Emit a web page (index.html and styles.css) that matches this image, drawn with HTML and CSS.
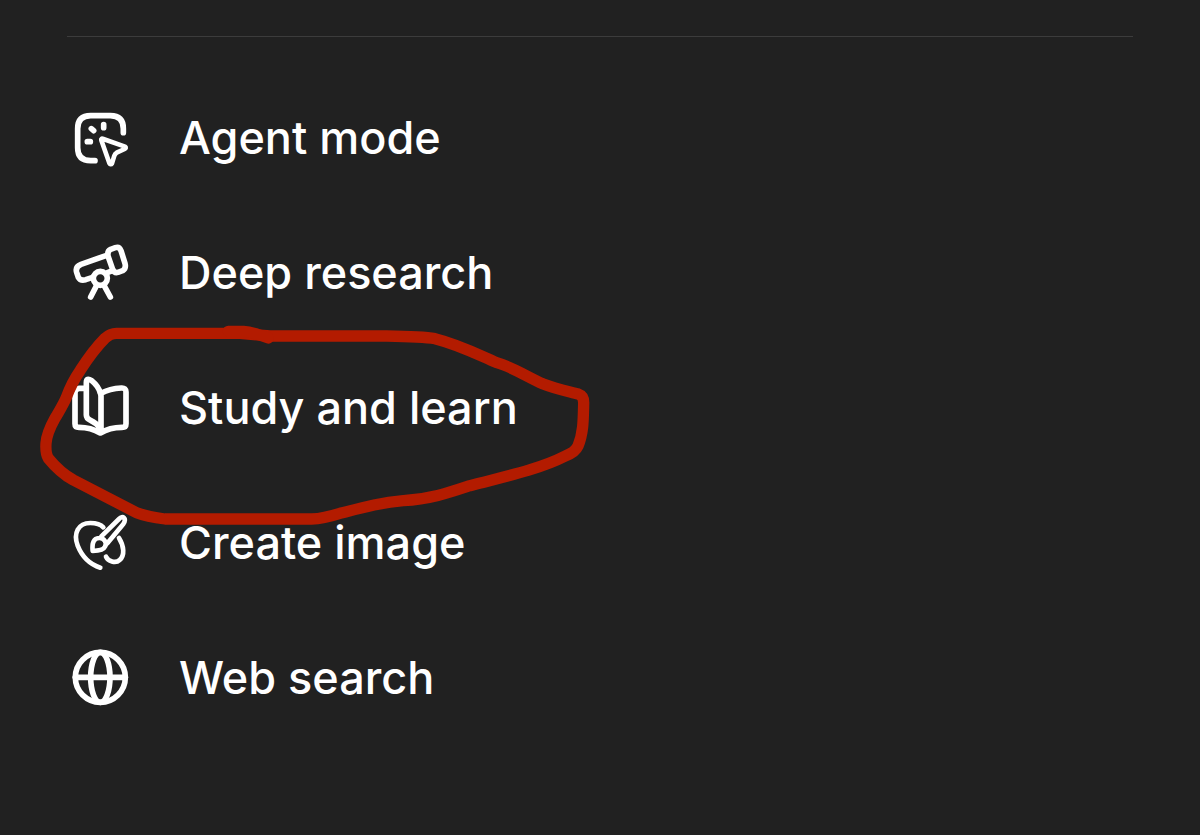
FILE: index.html
```html
<!DOCTYPE html>
<html lang="en">
<head>
  <meta charset="UTF-8" />
  <meta name="viewport" content="width=device-width, initial-scale=1" />
  <title>Tools menu</title>
  <link rel="stylesheet" href="styles.css">
</head>
<body>

<hr class="divider" />

<ul class="menu">
  <li>
    <button class="menu-item" type="button">
      <svg class="icon" viewBox="0 0 240 240" aria-hidden="true">
        <path d="M105 182H92Q53 182 53 143V86Q53 47 92 47H151Q190 47 190 86V98" />
        <path d="M131 74V83M94 86L101 92M82 125H91" />
        <path class="thin" d="M124 121Q122 114 130 117L195 140Q200 144 194 147L170 158Q165 161 163 167L156 190Q152 196 148 189Z" />
      </svg>
      <span class="label">Agent mode</span>
    </button>
  </li>
  <li>
    <button class="menu-item" type="button">
      <svg class="icon" viewBox="0 0 240 240" aria-hidden="true">
        <path d="M140 61L63 88Q45 95 50 112L55 127Q61 138 77 134L98 127" />
        <path d="M145 66Q140 49 152 43L166 38Q178 34 183 47L195 85Q199 101 188 107L174 112Q163 115 158 103Z" />
        <path d="M158 107L144 112" />
        <circle cx="121" cy="130" r="21" />
        <path d="M109 153L92 186M133 153L151 186" />
      </svg>
      <span class="label">Deep research</span>
    </button>
  </li>
  <li class="marked">
    <button class="menu-item" type="button">
      <svg class="icon" viewBox="0 6 240 240" aria-hidden="true">
        <path d="M70 61H58Q45 61 45 74V167Q45 178 57 178Q93 178 121 195Q149 178 186 178Q198 178 198 167V72Q198 59 184 60Q149 62 123 76V191" />
        <path d="M121 76Q116 55 95 38Q79 28 79 44V141Q79 151 91 157Q110 166 121 181" />
      </svg>
      <span class="label">Study and learn</span>
    </button>
    <!-- hand-drawn marker loop -->
    <svg class="marker" viewBox="0 0 1710 690" aria-hidden="true">
      <path d="M260 70H630L720 78H1070C1130 79 1180 80 1215 86C1290 105 1340 132 1400 158C1450 172 1490 200 1540 222C1580 238 1620 245 1645 252Q1662 258 1661 280C1660 330 1660 370 1644 408Q1636 426 1606 438C1520 482 1400 505 1320 527C1260 547 1200 568 1120 572C1050 578 1000 592 930 610Q880 626 845 627H405Q350 620 320 608L130 510Q90 488 55 445Q46 430 48 400Q50 370 75 325C88 302 100 284 109 262C120 232 132 208 150 182Q190 120 225 85Q240 70 260 70Z" />
      <path d="M595 64H640Q660 66 680 72L715 84" />
    </svg>
  </li>
  <li>
    <button class="menu-item" type="button">
      <svg class="icon" viewBox="0 0 240 240" aria-hidden="true">
        <path class="thin" d="M121 188C88 178 67 157 53 122C39 85 55 54 91 54Q118 54 130 67" />
        <path class="thin" d="M177 99C192 123 195 151 179 165C166 177 144 168 138 155" />
        <path class="thin" d="M98 138Q94 100 117 99C132 98 142 113 135 125Q130 137 98 138Z" />
        <path class="thin" d="M124 94L177 42Q186 33 192 39Q198 45 190 57L142 115" />
      </svg>
      <span class="label">Create image</span>
    </button>
  </li>
  <li>
    <button class="menu-item" type="button">
      <svg class="icon" viewBox="0 6 240 240" aria-hidden="true">
        <circle cx="121" cy="118" r="75" />
        <path d="M46 118H196" />
        <ellipse cx="121" cy="118" rx="29" ry="75" />
      </svg>
      <span class="label">Web search</span>
    </button>
  </li>
</ul>

</body>
</html>
```
FILE: styles.css
```css
body {
  margin: 0;
  background: #212121;
  color: #fff;
  font-family: Inter, "Liberation Sans", sans-serif;
}

.divider {
  height: 1px;
  margin: 36px 67px;
  border: none;
  background: #3c3c3c;
}

.menu {
  list-style: none;
  margin: 0;
  padding: 0;
}

.menu-item {
  display: flex;
  align-items: center;
  gap: 39px;
  width: 100%;
  padding: 27px 60px 28px;
  border: none;
  background: none;
  color: inherit;
  font: inherit;
  font-size: 45px;
  font-weight: 500;
  line-height: 56px;
  text-align: left;
  cursor: pointer;
}

.label {
  padding-bottom: 4px;
}

.icon {
  flex: none;
  width: 80px;
  height: 80px;
  fill: none;
  stroke: #fff;
  stroke-width: 17;
  stroke-linecap: round;
  stroke-linejoin: round;
}

.icon .thin {
  stroke-width: 14;
}

.marked {
  position: relative;
}

.marker {
  position: absolute;
  z-index: 1;
  top: -33px;
  left: 30px;
  width: 570px;
  height: 230px;
  fill: none;
  stroke: #b31b00;
  stroke-width: 34;
  stroke-linecap: round;
  stroke-linejoin: round;
  pointer-events: none;
}
```
